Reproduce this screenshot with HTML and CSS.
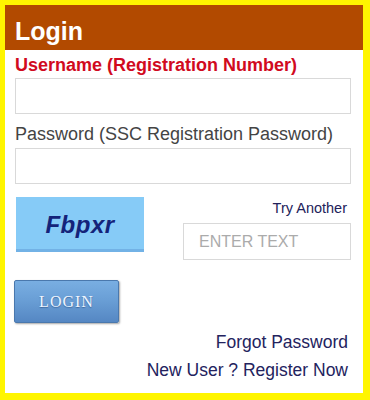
FILE: index.html
```html
<!DOCTYPE html>
<html>
<head>
<meta charset="utf-8">
<link rel="stylesheet" href="styles.css">
</head>
<body>
<div class="frame">
  <div class="header">Login</div>
  <div class="panel">
    <label class="label-user">Username (Registration Number)</label>
    <input class="field" type="text">
    <label class="label-pass">Password (SSC Registration Password)</label>
    <input class="field" type="password">
    <div class="captcha-row">
      <div class="captcha"><span>Fbpxr</span></div>
      <div class="captcha-side">
        <a class="try">Try Another</a>
        <input class="captcha-input" type="text" placeholder="ENTER TEXT">
      </div>
    </div>
    <button class="login-btn">LOGIN</button>
    <div class="links">
      <a class="link">Forgot Password</a>
      <a class="link link-reg">New User ? Register Now</a>
    </div>
  </div>
</div>
</body>
</html>
```
FILE: styles.css
```css
html, body {
  margin: 0;
  padding: 0;
  background: #fff;
}
.frame {
  box-sizing: border-box;
  width: 370px;
  height: 400px;
  border-style: solid;
  border-color: #fff500;
  border-width: 5px 7px 7px 5px;
  background: #fff;
  font-family: "Liberation Sans", Arial, sans-serif;
  display: flex;
  flex-direction: column;
}
.header {
  box-sizing: border-box;
  height: 45px;
  background: #b24a00;
  color: #fff;
  font-weight: bold;
  font-size: 25px;
  line-height: 28px;
  padding: 12px 0 0 10px;
}
.panel {
  flex: 1;
  display: flex;
  flex-direction: column;
  padding: 0 12px 0 10px;
}
.label-user {
  display: block;
  margin-top: 5px;
  font-size: 18px;
  line-height: 20px;
  font-weight: bold;
  color: #d10a1e;
}
.label-pass {
  display: block;
  margin-top: 10px;
  font-size: 18px;
  line-height: 20px;
  color: #444;
}
.field {
  box-sizing: border-box;
  display: block;
  width: 336px;
  height: 36px;
  margin: 3px 0 0 0;
  border: 1px solid #d9d9d9;
  background: #fff;
  outline: none;
}
.label-pass + .field {
  margin-top: 4px;
}
.captcha-row {
  display: flex;
  justify-content: space-between;
  margin-top: 13px;
}
.captcha {
  box-sizing: border-box;
  width: 128px;
  height: 55px;
  margin-left: 1px;
  background: #86cbf7;
  border-bottom: 3px solid #72b2e6;
  display: flex;
  align-items: center;
  justify-content: center;
  padding-top: 3px;
}
.captcha span {
  font-family: "Liberation Sans", Arial, sans-serif;
  font-style: italic;
  font-weight: bold;
  font-size: 24px;
  color: #14237a;
  letter-spacing: 0.5px;
}
.captcha-side {
  display: flex;
  flex-direction: column;
  align-items: flex-end;
  padding-top: 3px;
}
.try {
  font-size: 14.5px;
  line-height: 16px;
  color: #22225a;
  margin-right: 4px;
}
.captcha-input {
  box-sizing: border-box;
  width: 168px;
  height: 37px;
  margin-top: 7px;
  border: 1px solid #d9d9d9;
  padding: 0 0 0 15px;
  font-family: "Liberation Sans", Arial, sans-serif;
  font-size: 16px;
  outline: none;
}
.captcha-input::placeholder {
  color: #ababab;
}
.login-btn {
  box-sizing: border-box;
  align-self: flex-start;
  width: 105px;
  height: 43px;
  margin: 20px 0 0 -1px;
  border: 1px solid #4a78ad;
  border-radius: 2px;
  background: linear-gradient(to bottom, #79aee2 0%, #6a9fd6 45%, #5587c3 100%);
  box-shadow: 1px 1px 2px rgba(0, 0, 0, 0.35);
  color: #eef5ff;
  font-family: "Liberation Serif", "Times New Roman", serif;
  font-size: 16px;
  letter-spacing: 1px;
  padding: 0;
  text-shadow: 0 1px 1px rgba(30, 60, 110, 0.5);
}
.links {
  display: flex;
  flex-direction: column;
  align-items: flex-end;
  margin-top: 9px;
  padding-right: 3px;
}
.link {
  font-size: 17.5px;
  line-height: 20px;
  color: #23235e;
}
.link-reg {
  margin-top: 8px;
}
```
